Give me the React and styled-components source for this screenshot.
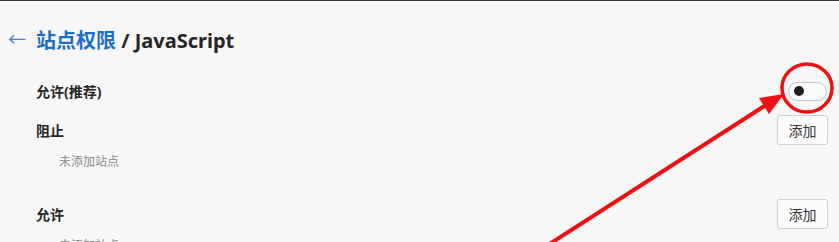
import React from "react";
import styled, { createGlobalStyle } from "styled-components";

const GlobalStyle = createGlobalStyle`
  html, body {
    margin: 0;
    padding: 0;
    background: #f7f7f7;
  }
  body {
    font-family: "Noto Sans", "Noto Sans CJK SC", sans-serif;
    color: #1b1b1b;
  }
`;

const Page = styled.div`
  position: relative;
  width: 839px;
  height: 242px;
  overflow: hidden;
  box-sizing: border-box;
  border-top: 1px solid #333;
  background: #f7f7f7;
  padding: 0 11px 0 8px;
`;

const Header = styled.div`
  display: flex;
  align-items: center;
  height: 40px;
  margin-top: 18px;
`;

const Back = styled.span`
  width: 28px;
  font-size: 18px;
  color: #4a7fc1;
  line-height: 1;
`;

const Title = styled.h1`
  margin: 0;
  font-family: "Noto Sans", "Noto Sans CJK SC", sans-serif;
  font-size: 20px;
  font-weight: 700;
  color: #262626;
  letter-spacing: 0;
`;

const Crumb = styled.span`
  color: #1a6fc4;
`;

const Row = styled.div`
  display: flex;
  align-items: center;
  justify-content: space-between;
  height: 32px;
  margin-top: ${(p) => p.$gap}px;
  padding-left: 28px;
`;

const Label = styled.span`
  font-size: 14px;
  font-weight: 700;
  color: #262626;
`;

const Empty = styled.div`
  height: 20px;
  line-height: 20px;
  margin-top: 6px;
  padding-left: 51px;
  font-size: 12px;
  color: #8a8a8a;
`;

const Toggle = styled.div`
  box-sizing: border-box;
  width: 39px;
  height: 19px;
  border: 1px solid #c6c6c6;
  border-radius: 10px;
  background: #fbfbfb;
  display: flex;
  align-items: center;
  padding-left: 5px;
  margin-right: 1px;
`;

const Knob = styled.span`
  width: 10px;
  height: 10px;
  border-radius: 50%;
  background: #1e1e1e;
`;

const AddButton = styled.button`
  box-sizing: border-box;
  width: 51px;
  height: 30px;
  border: 1px solid #d0d0d0;
  border-radius: 3px;
  background: #fcfcfc;
  font-family: "Noto Sans CJK SC", sans-serif;
  font-size: 14px;
  color: #333;
  padding: 0;
`;

const Annotation = styled.svg`
  position: absolute;
  left: 0;
  top: 0;
  pointer-events: none;
`;

export default function App() {
  return (
    <>
      <GlobalStyle />
      <Page>
        <Header>
          <Back>←</Back>
          <Title>
            <Crumb>站点权限</Crumb> / JavaScript
          </Title>
        </Header>

        <Row $gap={16}>
          <Label>允许(推荐)</Label>
          <Toggle>
            <Knob />
          </Toggle>
        </Row>

        <Row $gap={7}>
          <Label>阻止</Label>
          <AddButton>添加</AddButton>
        </Row>
        <Empty>未添加站点</Empty>

        <Row $gap={26}>
          <Label>允许</Label>
          <AddButton>添加</AddButton>
        </Row>
        <Empty>未添加站点</Empty>

        <Annotation width="839" height="242" viewBox="0 0 839 242">
          <ellipse cx="807" cy="87" rx="25" ry="24" fill="none" stroke="#ee1111" strokeWidth="3.5" />
          <line x1="548" y1="244" x2="766" y2="104" stroke="#ee1111" strokeWidth="4" />
          <polygon points="784,93 769,113 759,97" fill="#ee1111" />
        </Annotation>
      </Page>
    </>
  );
}
